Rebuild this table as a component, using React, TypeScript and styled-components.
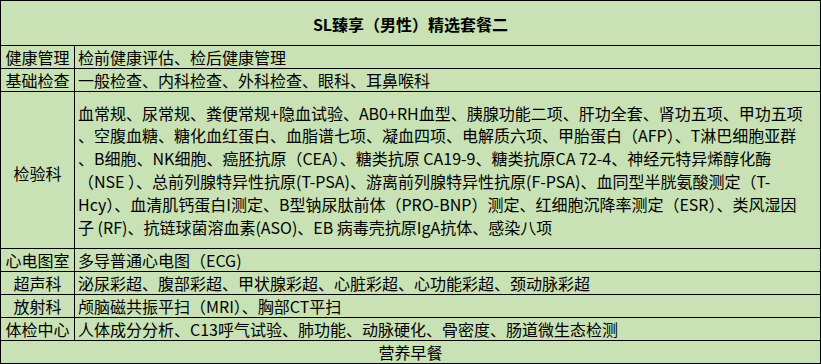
import { Fragment } from 'react';
import styled, { createGlobalStyle } from 'styled-components';

const GlobalStyle = createGlobalStyle`
	html,
	body {
		margin: 0;
		padding: 0;
		background: #ffffff;
	}
	body {
		font-family: 'Noto Sans CJK SC', 'Noto Sans', sans-serif;
		color: #000000;
	}
`;

type Row = {
	label: string;
	lines: string[];
};

const rows: Row[] = [
	{ label: '健康管理', lines: ['检前健康评估、检后健康管理'] },
	{ label: '基础检查', lines: ['一般检查、内科检查、外科检查、眼科、耳鼻喉科'] },
	{
		label: '检验科',
		lines: [
			'血常规、尿常规、粪便常规+隐血试验、AB0+RH血型、胰腺功能二项、肝功全套、肾功五项、甲功五项',
			'、空腹血糖、糖化血红蛋白、血脂谱七项、凝血四项、电解质六项、甲胎蛋白（AFP）、T淋巴细胞亚群',
			'、B细胞、NK细胞、癌胚抗原（CEA）、糖类抗原 CA19-9、糖类抗原CA 72-4、神经元特异烯醇化酶',
			'（NSE ）、总前列腺特异性抗原(T-PSA)、游离前列腺特异性抗原(F-PSA)、血同型半胱氨酸测定（T-',
			'Hcy）、血清肌钙蛋白I测定、B型钠尿肽前体（PRO-BNP）测定、红细胞沉降率测定（ESR）、类风湿因',
			'子 (RF)、抗链球菌溶血素(ASO)、EB 病毒壳抗原IgA抗体、感染八项',
		],
	},
	{ label: '心电图室', lines: ['多导普通心电图（ECG)'] },
	{ label: '超声科', lines: ['泌尿彩超、腹部彩超、甲状腺彩超、心脏彩超、心功能彩超、颈动脉彩超'] },
	{ label: '放射科', lines: ['颅脑磁共振平扫（MRI）、胸部CT平扫'] },
	{ label: '体检中心', lines: ['人体成分分析、C13呼气试验、肺功能、动脉硬化、骨密度、肠道微生态检测'] },
];

const App = () => {
	return (
		<>
			<GlobalStyle />
			<Table>
				<TitleCell>SL臻享（男性）精选套餐二</TitleCell>
				{rows.map((row) => (
					<Fragment key={row.label}>
						<LabelCell tall={row.lines.length > 1}>{row.label}</LabelCell>
						<ContentCell tall={row.lines.length > 1}>
							{row.lines.map((line, i) => (
								<Line key={i}>{line}</Line>
							))}
						</ContentCell>
					</Fragment>
				))}
				<FooterCell>营养早餐</FooterCell>
			</Table>
		</>
	);
};

export default App;

const Table = styled.div`
	width: 821px;
	height: 364px;
	box-sizing: border-box;
	display: grid;
	grid-template-columns: 73px 745px;
	grid-template-rows: 44px 22px 22px 156px 22px 22px 22px 22px 22px;
	gap: 1px;
	padding: 1px;
	background: #000000;
	font-size: 16px;
`;

const Cell = styled.div`
	background: #c8e2b5;
	display: flex;
	align-items: center;
	overflow: hidden;
	white-space: nowrap;
`;

const TitleCell = styled(Cell)`
	grid-column: 1 / 3;
	justify-content: center;
	font-weight: 700;
	padding-top: 1px;
`;

const FooterCell = styled(Cell)`
	grid-column: 1 / 3;
	justify-content: center;
`;

const LabelCell = styled(Cell)<{ tall?: boolean }>`
	justify-content: center;
	padding-top: ${(p) => (p.tall ? '6px' : '0')};
`;

const ContentCell = styled(Cell)<{ tall?: boolean }>`
	flex-direction: column;
	align-items: flex-start;
	justify-content: center;
	padding-left: 3px;
	line-height: ${(p) => (p.tall ? '22.8px' : '22px')};
`;

const Line = styled.div`
	white-space: pre;
`;
